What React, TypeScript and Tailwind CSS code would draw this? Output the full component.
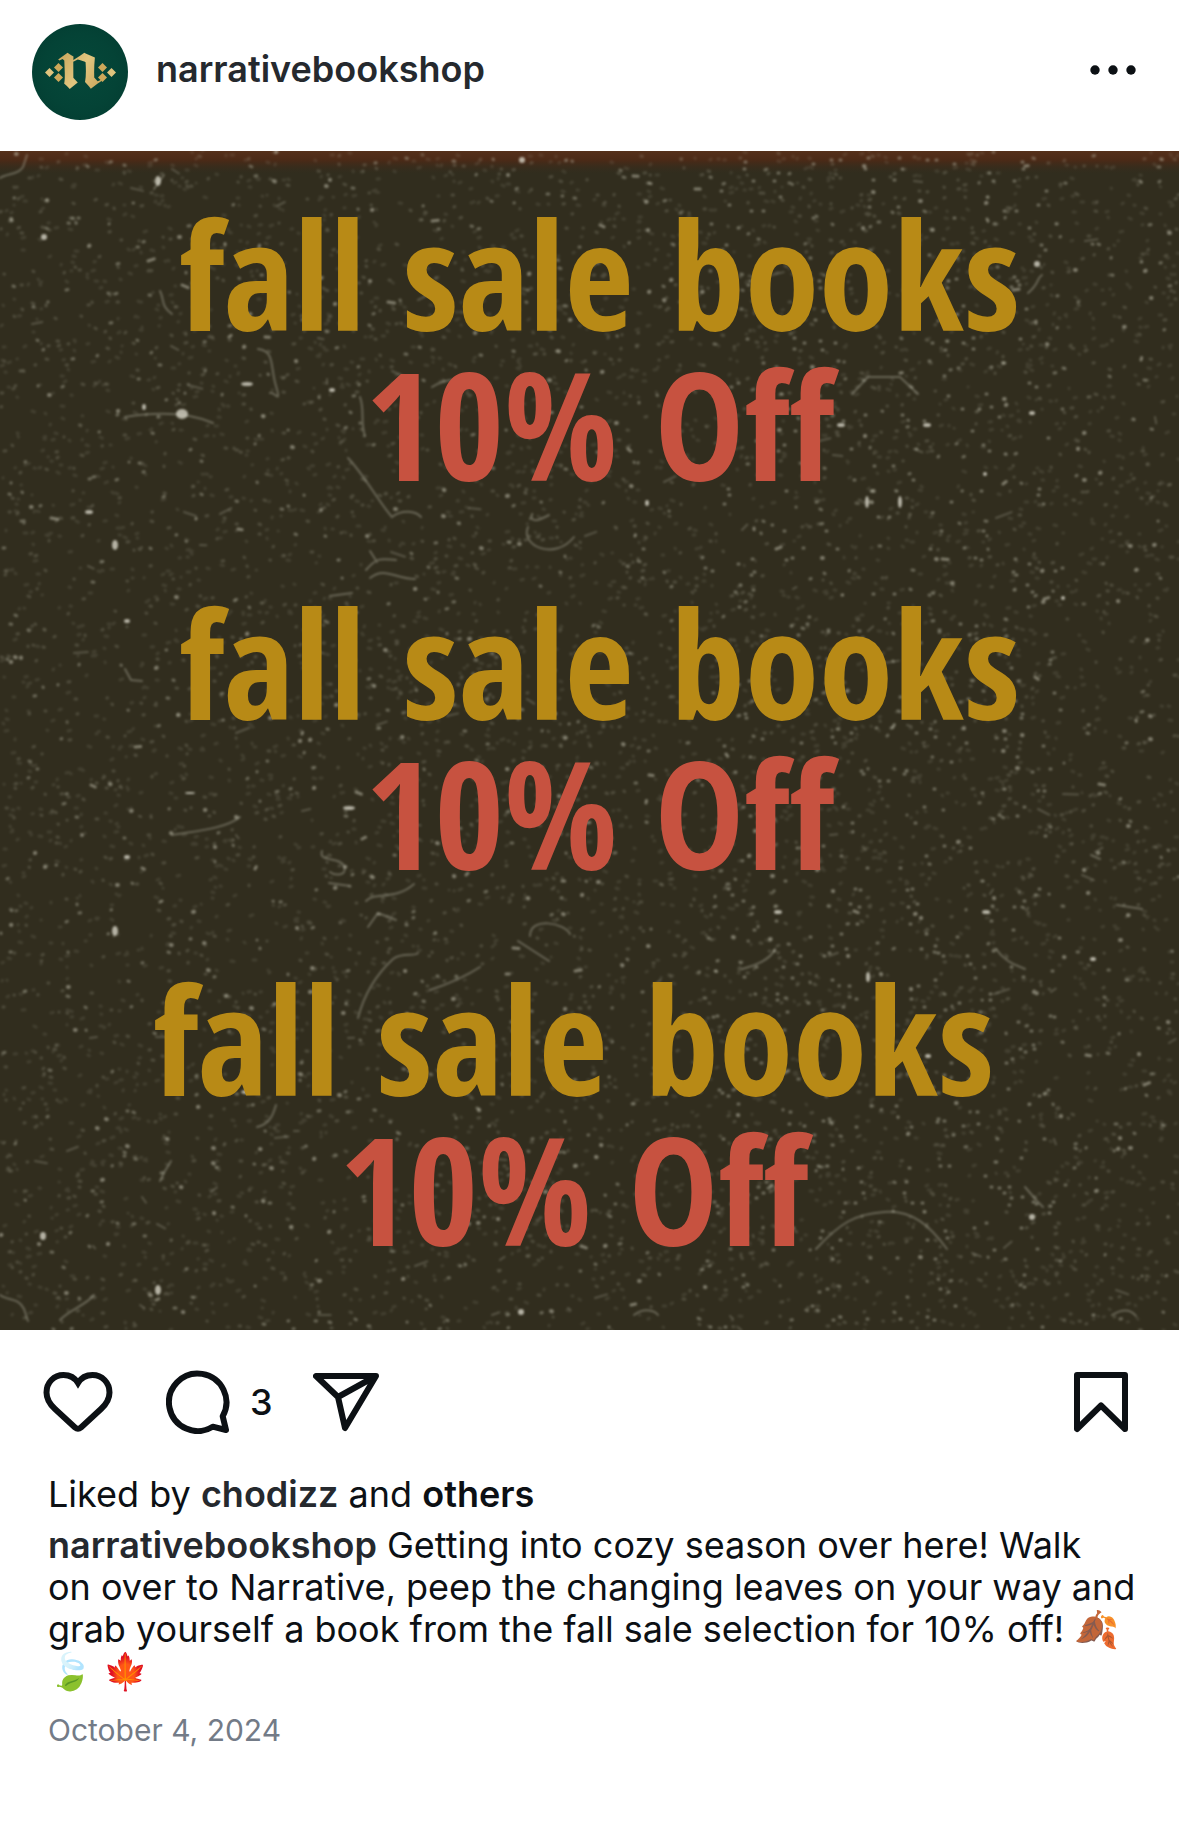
import type { ReactNode } from "react";

const SIZE = 1179;

function createRandom(seed: number) {
  let s = seed;
  return () => {
    s = (s + 0x6d2b79f5) | 0;
    let t = Math.imul(s ^ (s >>> 15), 1 | s);
    t = (t + Math.imul(t ^ (t >>> 7), 61 | t)) ^ t;
    return ((t ^ (t >>> 14)) >>> 0) / 4294967296;
  };
}

type DustLayer = { d: string; width: number; opacity: number };

function scatter(seed: number, count: number, width: number, opacity: number, length: number): DustLayer {
  const random = createRandom(seed);
  let d = "";
  for (let i = 0; i < count; i++) {
    const x = Math.round(random() * SIZE);
    const y = Math.round(random() * SIZE);
    const dx = (random() * length).toFixed(1);
    const dy = ((random() - 0.5) * length * 0.8).toFixed(1);
    d += `M${x} ${y}l${dx} ${dy}`;
  }
  return { d, width, opacity };
}

function scatterMirrored(seed: number, count: number): string {
  const random = createRandom(seed);
  const axis = 884;
  let d = "";
  for (let i = 0; i < count; i++) {
    const off = 4 + random() * 175;
    const y = Math.round(random() * SIZE);
    d += `M${Math.round(axis - off)} ${y}h1M${Math.round(axis + off)} ${y}h-1`;
  }
  return d;
}

const dust: DustLayer[] = [
  scatter(11, 4800, 3, 0.12, 3),
  scatter(23, 2400, 3, 0.2, 2),
  scatter(37, 800, 3, 0.38, 2),
  scatter(41, 240, 4, 0.5, 1),
  scatter(59, 70, 3, 0.5, 7),
  scatter(83, 90, 2, 0.25, 16),
];
const mirroredDust = scatterMirrored(71, 260);

const scratches = [
  "M0 27C8 22 18 24 23 16L27 4",
  "M154 38L164 24",
  "M160 140C165 150 160 154 172 163",
  "M258 198C275 200 270 215 276 235S274 240 270 242",
  "M125 266C150 262 185 260 213 272",
  "M348 307C365 325 378 350 392 366C402 358 416 360 421 366",
  "M360 246C365 260 360 270 365 285",
  "M366 419C378 405 382 408 396 409M370 427C385 415 395 428 415 428M370 400L377 411",
  "M530 368C538 352 520 380 549 364M528 376C520 395 555 410 574 386",
  "M432 236C450 225 460 228 474 238",
  "M330 445L352 442",
  "M125 518L131 529L142 530",
  "M172 684C195 680 225 678 240 666",
  "M322 700C318 712 340 705 344 715S335 725 330 721M329 732L350 735",
  "M366 750C376 740 395 750 414 733M368 776L378 762L396 769",
  "M530 785C530 765 565 772 570 783M518 790L549 810",
  "M430 839C445 834 462 828 480 816",
  "M358 867C365 840 380 820 393 808C402 801 415 806 418 802",
  "M160 1030L165 1020L171 1010",
  "M0 1144C8 1150 18 1146 24 1158L28 1170",
  "M60 1169C70 1158 85 1155 94 1144",
  "M276 954C273 964 270 973 257 976",
  "M852 243L868 226H900L918 243",
  "M816 1098C840 1072 855 1063 884 1061S930 1075 947 1098",
  "M1025 1036L1037 1050L1043 1056",
  "M634 1164C645 1156 655 1160 658 1164M1112 1164C1125 1156 1132 1160 1136 1165",
  "M1117 754L1142 758M1091 704L1100 708",
  "M742 818C752 815 770 810 775 798M996 798C1003 808 1010 812 1025 818",
  "M1028 142C1040 132 1036 128 1042 124",
];

const flakes = [
  [182, 263, 6, 5], [115, 394, 3, 5], [158, 30, 3, 5], [44, 86, 3, 3], [247, 233, 6, 2],
  [332, 239, 3, 2], [522, 9, 3, 3], [89, 361, 4, 2], [127, 470, 3, 2], [144, 256, 2, 3],
  [841, 274, 4, 2], [927, 274, 4, 2], [867, 351, 2, 6], [900, 351, 2, 6], [647, 352, 2, 3],
  [349, 657, 6, 2], [115, 780, 3, 5], [190, 642, 5, 1], [127, 706, 3, 2], [43, 1085, 3, 4],
  [158, 1139, 3, 5], [521, 1161, 3, 3], [247, 941, 6, 2], [868, 826, 2, 5], [928, 905, 3, 2],
  [778, 761, 4, 2], [986, 761, 4, 2], [1093, 808, 3, 2], [1032, 1066, 3, 3], [735, 1066, 2, 3],
  [1032, 262, 3, 2], [1063, 447, 2, 2], [985, 323, 2, 2], [1037, 113, 3, 3],
];

function DustTexture() {
  return (
    <svg
      className="absolute inset-0 h-full w-full"
      viewBox={`0 0 ${SIZE} ${SIZE}`}
      preserveAspectRatio="xMidYMid slice"
      aria-hidden="true"
    >
      <defs>
        <filter id="soften">
          <feGaussianBlur stdDeviation="0.9" />
        </filter>
        <linearGradient id="rust" x1="0" y1="0" x2="0" y2="1">
          <stop offset="0" stopColor="#55301a" />
          <stop offset="0.4" stopColor="#4a2a17" />
          <stop offset="1" stopColor="#312d1e" stopOpacity="0" />
        </linearGradient>
      </defs>
      <rect width={SIZE} height="24" fill="url(#rust)" />
      <g filter="url(#soften)" stroke="#c9c8b6" strokeLinecap="round" fill="none">
        {dust.map((layer, i) => (
          <path key={i} d={layer.d} strokeWidth={layer.width} opacity={layer.opacity} />
        ))}
        <path d={mirroredDust} strokeWidth="3" opacity="0.42" />
        {scratches.map((d, i) => (
          <path key={i} d={d} strokeWidth="2" opacity="0.35" />
        ))}
        <g fill="#d6d4c6" stroke="none" opacity="0.8">
          {flakes.map(([x, y, rx, ry], i) => (
            <ellipse key={i} cx={x} cy={y} rx={rx} ry={ry} />
          ))}
        </g>
      </g>
    </svg>
  );
}

function Avatar() {
  return (
    <div className="relative flex size-24 shrink-0 items-center justify-center overflow-hidden rounded-full bg-[radial-gradient(circle,#05483a_0%,#044336_55%,#033a2f_100%)]">
      <svg className="absolute inset-0 size-full" viewBox="0 0 96 96" aria-hidden="true">
        <g fill="#cda85a">
          <path d="M17.500 44L22 48.500L17.500 53L13 48.500Z" fill="#e0c47e" />
          <path d="M26.500 39L31 43.500L26.500 48L22 43.500Z" />
          <path d="M26.500 49L31 53.500L26.500 58L22 53.500Z" />
          <path d="M70.500 39L75 43.500L70.500 48L66 43.500Z" />
          <path d="M70.500 49L75 53.500L70.500 58L66 53.500Z" />
          <path d="M79.500 44L84 48.500L79.500 53L75 48.500Z" fill="#e0c47e" />
        </g>
      </svg>
      <span className="bg-gradient-to-br from-[#b98f42] via-[#e2c67f] to-[#b88d3f] bg-clip-text pb-2 font-['DejaVu_Math_TeX_Gyre',serif] text-[64px] leading-[80px] text-transparent">
        𝖓
      </span>
    </div>
  );
}

function IconButton({ label, children }: { label: string; children: ReactNode }) {
  return (
    <button type="button" aria-label={label} className="flex shrink-0 items-center">
      {children}
    </button>
  );
}

function SaleBlock({ className }: { className: string }) {
  return (
    <div
      className={`flex flex-col items-center font-['Open_Sans_Condensed','Open_Sans',sans-serif] text-[150px] leading-[150px] font-bold whitespace-nowrap ${className}`}
    >
      <p className="text-[#b88a16]">fall sale books</p>
      <p className="text-[#c75240]">10% Off</p>
    </div>
  );
}

export default function App() {
  return (
    <article className="min-h-screen bg-white font-['Inter',sans-serif] text-[36px] leading-[42px] text-[#0c1014]">
      <header className="flex items-center justify-between pt-6 pr-[42px] pb-[31px] pl-8">
        <a href="#profile" className="flex items-center gap-7">
          <Avatar />
          <span className="pb-1.5 font-semibold text-[#25292e]">narrativebookshop</span>
        </a>
        <IconButton label="More options">
          <svg width="48" height="24" viewBox="0 0 48 24" fill="currentColor">
            <circle cx="6" cy="10" r="4.700" />
            <circle cx="24" cy="10" r="4.700" />
            <circle cx="42" cy="10" r="4.700" />
          </svg>
        </IconButton>
      </header>

      <section className="relative aspect-square w-full overflow-hidden bg-[#312d1e]">
        <DustTexture />
        <div className="relative flex flex-col pt-[47px]">
          <SaleBlock className="pb-[89px] pl-5" />
          <SaleBlock className="pb-[76px] pl-5" />
          <SaleBlock className="pr-8" />
        </div>
      </section>

      <div className="flex items-center justify-between pt-10 pr-[50px] pl-[43px]">
        <div className="flex items-center">
          <IconButton label="Like">
            <svg width="70" height="62" viewBox="0 0 70 62" fill="none" stroke="currentColor" strokeWidth="6">
              <path d="M35 12C32 7 27 4 20.500 4C11 4 3.500 11.500 3.500 21.500C3.500 28 6.500 33 12 38L32 56.500Q35 59 38 56.500L58 38C63.500 33 66.500 28 66.500 21.500C66.500 11.500 59 4 49.500 4C43 4 38 7 35 12Z" />
            </svg>
          </IconButton>
          <div className="flex items-center gap-5 pl-[53px]">
            <IconButton label="Comment">
              <svg width="64" height="64" viewBox="0 0 64 64" fill="none" stroke="currentColor" strokeWidth="6" strokeLinejoin="round">
                <path d="M46.700 56.700A28.700 28.700 0 1 1 56.700 46.300L60 60Z" />
              </svg>
            </IconButton>
            <span className="font-medium">3</span>
          </div>
          <div className="flex pl-10">
            <IconButton label="Share">
              <svg width="66" height="62" viewBox="0 0 66 62" fill="none" stroke="currentColor" strokeWidth="6" strokeLinejoin="round">
                <path d="M3 5H63L32 57L25 26ZM25 26L63 5" />
              </svg>
            </IconButton>
          </div>
        </div>
        <IconButton label="Save">
          <svg width="56" height="62" viewBox="0 0 56 62" fill="none" stroke="currentColor" strokeWidth="6" strokeLinejoin="round">
            <path d="M4 4H52V58L28 34.500L4 58Z" />
          </svg>
        </IconButton>
      </div>

      <div className="pt-[39px] pr-9 pb-12 pl-12">
        <p>
          Liked by{" "}
          <a href="#chodizz" className="font-semibold text-[#25292e]">chodizz</a> and{" "}
          <a href="#likes" className="font-semibold">others</a>
        </p>
        <p className="pt-[9px]">
          <a href="#profile" className="font-semibold text-[#25292e]">narrativebookshop</a>{" "}
          Getting into cozy season over here! Walk on&nbsp;over to Narrative, peep the changing leaves on your way and
          grab yourself a book from the fall sale selection for 10% off! 🍂 🍃 🍁
        </p>
        <p className="pt-[18px] text-[30px] leading-10 text-[#737b87]">
          <time dateTime="2024-10-04">October 4, 2024</time>
        </p>
      </div>
    </article>
  );
}
